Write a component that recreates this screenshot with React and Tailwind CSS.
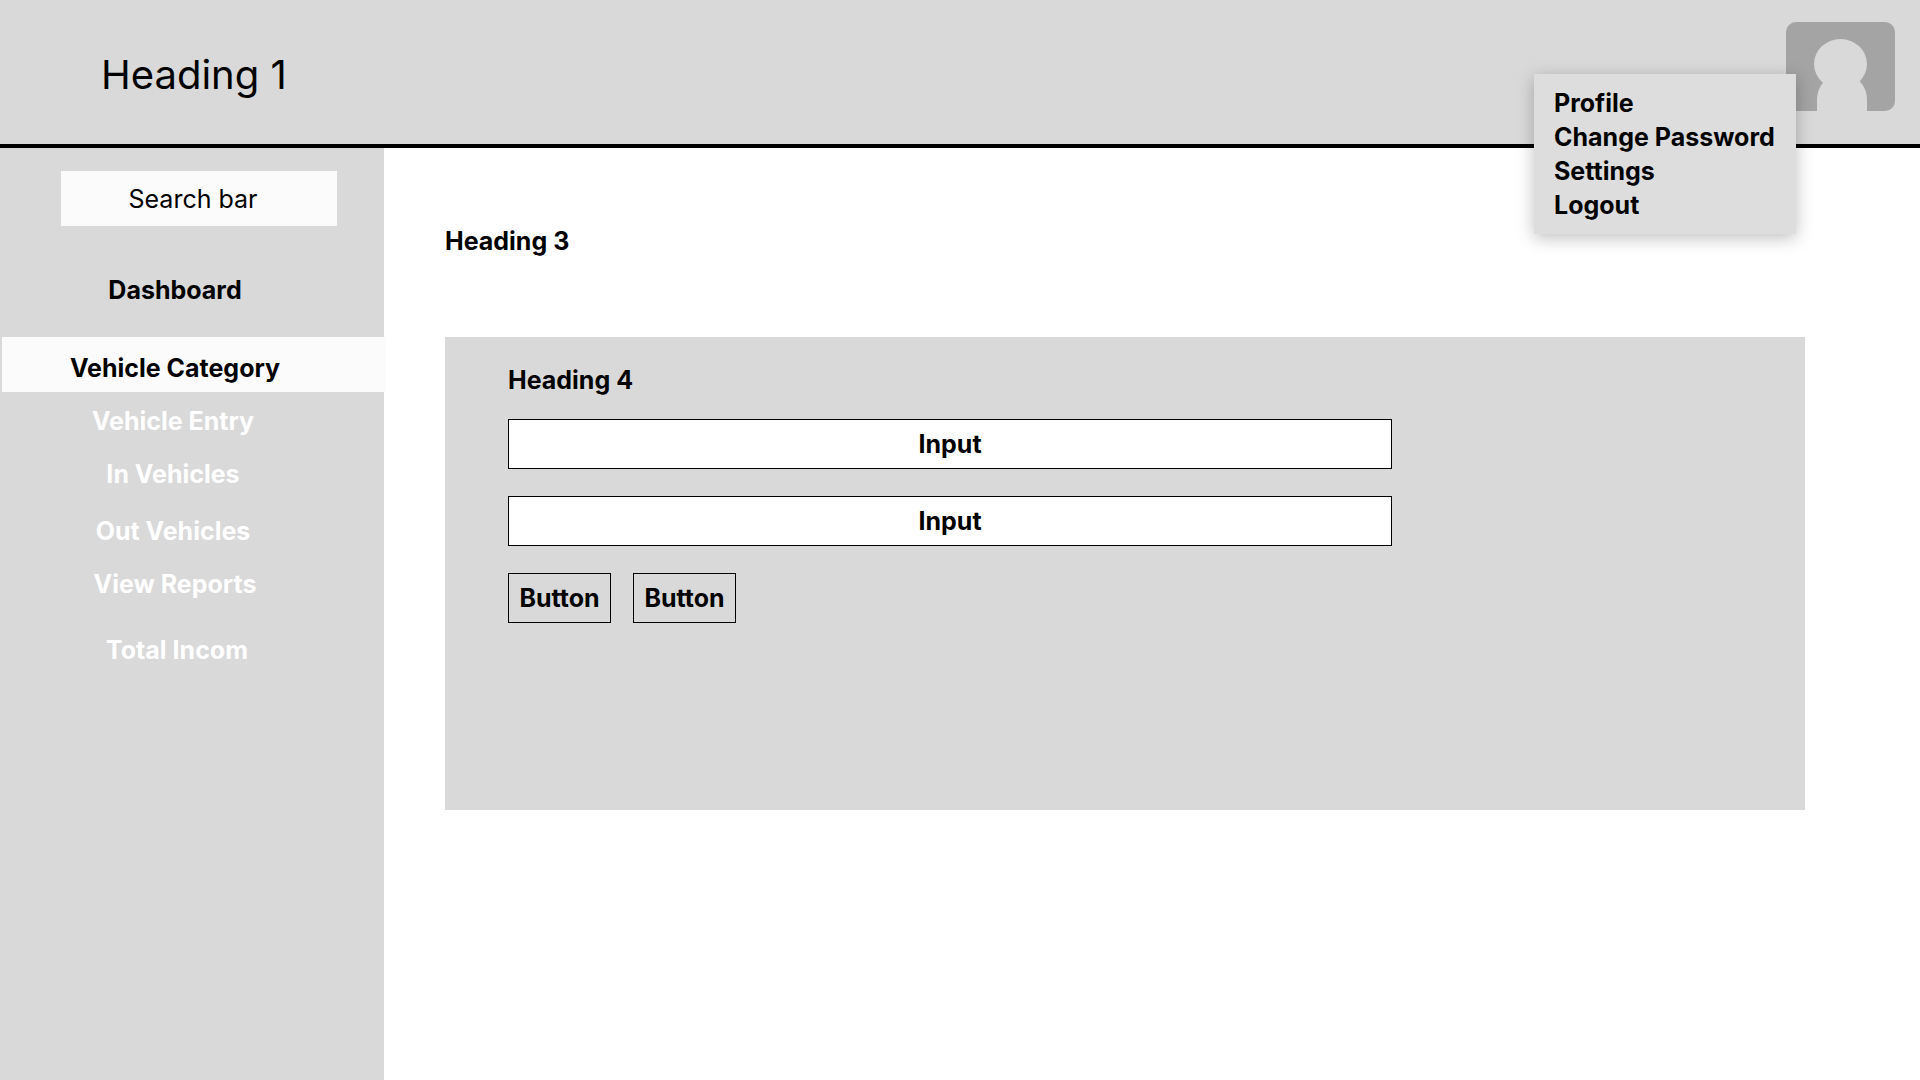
const menuItems = ["Profile", "Change Password", "Settings", "Logout"];

const navItems = [
  { label: "Dashboard", className: "mt-[49px] pr-[34px] text-black" },
  {
    label: "Vehicle Category",
    current: true,
    className: "mt-8 ml-0.5 -mr-0.5 bg-[#fbfbfb] pt-4 pr-[38px] pb-[9px] text-black",
  },
  { label: "Vehicle Entry", className: "mt-3.5 pr-[38px] text-white" },
  { label: "In Vehicles", className: "mt-[23px] pr-[38px] text-white" },
  { label: "Out Vehicles", className: "mt-[27px] pr-[38px] text-white" },
  { label: "View Reports", className: "mt-[23px] pr-[34px] text-white" },
  { label: "Total Incom", className: "mt-9 pr-[30px] text-white" },
];

function Avatar() {
  return (
    <svg width="109" height="89" viewBox="0 0 109 89" aria-hidden="true">
      <rect width="109" height="89" rx="10" fill="#a4a4a4" />
      <ellipse cx="54.5" cy="42" rx="26.5" ry="25" fill="#d9d9d9" />
      <path d="M31 89V77a25 25 0 0 1 50 0v12z" fill="#d9d9d9" />
    </svg>
  );
}

function Header() {
  return (
    <header className="relative flex items-start justify-between border-b-4 border-black bg-[#d9d9d9] pr-[25px] pb-[33px] pl-[101px] pt-[22px]">
      <h1 className="pt-[29px] text-[40px] leading-[48px]">Heading 1</h1>
      <button type="button" aria-label="Account menu" aria-expanded="true">
        <Avatar />
      </button>
      <ul className="absolute top-[74px] right-[124px] z-10 min-w-[262px] bg-[#ddd] py-3 pl-5 text-[25px] leading-[34px] font-bold shadow-[0_4px_16px_rgba(0,0,0,0.25)]">
        {menuItems.map((item) => (
          <li key={item}>
            <a href="#">{item}</a>
          </li>
        ))}
      </ul>
    </header>
  );
}

function Sidebar() {
  return (
    <aside className="w-96 shrink-0 bg-[#d9d9d9] pt-[23px] text-[25px] leading-[30px]">
      <div className="pr-[47px] pl-[61px]">
        <input
          type="text"
          role="searchbox"
          aria-label="Search"
          placeholder="Search bar"
          className="block h-[55px] w-full bg-[#fbfbfb] pr-3 text-center placeholder:text-black placeholder:opacity-100"
        />
      </div>
      <nav className="flex flex-col text-center font-bold">
        {navItems.map((item) => (
          <a
            key={item.label}
            href="#"
            aria-current={item.current ? "page" : undefined}
            className={item.className}
          >
            {item.label}
          </a>
        ))}
      </nav>
    </aside>
  );
}

function Field({ label }) {
  return (
    <input
      type="text"
      aria-label={label}
      placeholder="Input"
      className="h-[50px] w-full max-w-[884px] border border-black bg-white px-3 text-center placeholder:text-black placeholder:opacity-100"
    />
  );
}

export default function App() {
  return (
    <div className="flex min-h-screen flex-col bg-white font-['Inter',sans-serif] text-black">
      <Header />
      <div className="flex flex-1">
        <Sidebar />
        <main className="min-w-0 flex-1 pt-[78px] pr-[115px] pl-[61px] text-[25px] leading-[30px] font-bold">
          <h3>Heading 3</h3>
          <section className="mt-[81px] min-h-[473px] bg-[#d9d9d9] px-[63px] pt-7">
            <h4>Heading 4</h4>
            <form className="mt-6 flex flex-col gap-[27px]">
              <Field label="First input" />
              <Field label="Second input" />
              <div className="flex gap-[22px]">
                <button type="button" className="h-[50px] min-w-[103px] border border-black px-2">
                  Button
                </button>
                <button type="button" className="h-[50px] min-w-[103px] border border-black px-2">
                  Button
                </button>
              </div>
            </form>
          </section>
        </main>
      </div>
    </div>
  );
}
